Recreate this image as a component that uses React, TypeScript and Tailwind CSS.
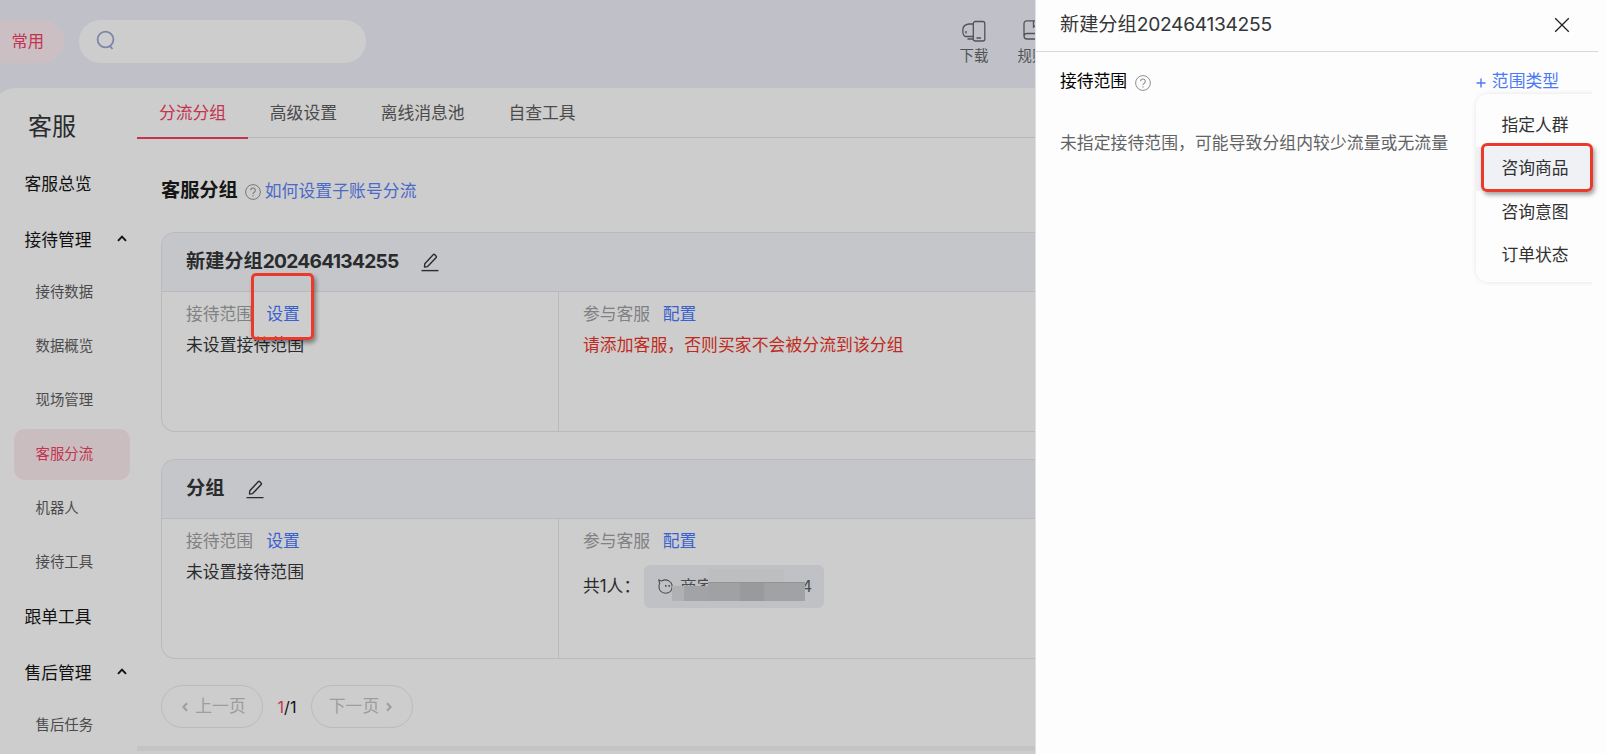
import { ReactNode } from 'react';

const sideItems = [
    { label: '客服总览', type: 'group' },
    { label: '接待管理', type: 'open' },
    { label: '接待数据', type: 'sub' },
    { label: '数据概览', type: 'sub' },
    { label: '现场管理', type: 'sub' },
    { label: '客服分流', type: 'active' },
    { label: '机器人', type: 'sub' },
    { label: '接待工具', type: 'sub' },
    { label: '跟单工具', type: 'group' },
    { label: '售后管理', type: 'open' },
    { label: '售后任务', type: 'sub' },
];

const tabs = ['分流分组', '高级设置', '离线消息池', '自查工具'];
const scopeTypes = ['指定人群', '咨询商品', '咨询意图', '订单状态'];

function HelpIcon({ className }: { className?: string }) {
    return (
        <svg viewBox="0 0 16 16" className={`size-4 shrink-0 ${className}`} fill="none" stroke="currentColor">
            <circle cx="8" cy="8" r="7.4" strokeWidth="1" />
            <path d="M5.7 6.3a2.3 2.3 0 1 1 3.6 1.9c-.8.6-1.3.9-1.3 1.9" strokeWidth="1.1" />
            <path d="M8 11.2v1.3" strokeWidth="1.2" />
        </svg>
    );
}

function EditIcon() {
    return (
        <svg viewBox="0 0 18 19" className="w-[18px] h-[19px]" fill="none" stroke="#2b2c2e" strokeWidth="1.4">
            <path d="M3.8 10.7 12.4 1.6Q13 1 13.6 1.6L15.2 3.2Q15.7 3.8 15.2 4.4L6.6 13.6 3.5 14z" strokeLinejoin="round" />
            <path d="M.5 17.6h17" />
        </svg>
    );
}

function SideItem({ label, type }: { label: string; type: string }) {
    if (type === 'sub' || type === 'active') {
        return (
            <div className="h-[54px] flex items-center pl-[14px]">
                <div
                    className={`w-[116px] h-[51px] rounded-[11px] pl-[21.5px] flex items-center text-[14.4px] ${
                        type === 'active' ? 'bg-[#cabdc0] text-[#c2344f]' : 'text-[#4b4b4c]'
                    }`}
                >
                    {label}
                </div>
            </div>
        );
    }
    return (
        <div className={`h-14 flex items-center pl-[24.5px] text-[#111] ${type === 'open' ? '-mb-[3px]' : ''}`}>
            <span className="w-[92.5px] pt-[2px]">{label}</span>
            {type === 'open' && (
                <svg viewBox="0 0 10 7" className="w-[10px] h-[7px] -mt-1" fill="none" stroke="#111" strokeWidth="1.9">
                    <path d="M1 5.8 5 1.7 9 5.8" />
                </svg>
            )}
        </div>
    );
}

function GroupCard({ name, digits, children }: { name: string; digits?: string; children: ReactNode }) {
    return (
        <div className="h-[200px] border border-[#b9babc] rounded-tl-[14px] rounded-bl-[14px] border-r-0 overflow-hidden flex flex-col">
            <div className="h-[59px] shrink-0 bg-[#c4c6c9] border-b border-[#b9babc] flex items-center pl-[24px] text-[19.2px] font-bold text-[#2a2b2d]">
                <span className="mr-[22px] -mt-[2px]">
                    {name}
                    <span className="tracking-[-0.75px]">{digits}</span>
                </span>
                <EditIcon />
            </div>
            <div className="flex-1 flex">
                <div className="w-[397px] pl-[24px] pt-[8.5px] border-r border-[#b9babc]">
                    <div className="h-[27px] leading-[27px] flex gap-[13px]">
                        <span className="text-[#808183]">接待范围</span>
                        <span className="text-[#3a61cd]">设置</span>
                    </div>
                    <div className="mt-1 h-[27px] leading-[27px] tracking-[0.09px]">未设置接待范围</div>
                </div>
                <div className="pl-[24px] pt-[8.5px]">
                    <div className="h-[27px] leading-[27px] flex gap-[12.5px]">
                        <span className="text-[#808183]">参与客服</span>
                        <span className="text-[#3a61cd]">配置</span>
                    </div>
                    {children}
                </div>
            </div>
        </div>
    );
}

function StaffChip() {
    return (
        <div className="relative ml-[11px] w-[180px] h-[43px] rounded-md bg-[#bfc1c4] flex items-center pl-[14px] pr-[12px] text-[#4b4c4e]">
            <svg viewBox="0 0 15 15" className="size-[15px] mr-[7px]" fill="none" stroke="currentColor" strokeWidth="1.1">
                <path d="M.8 1 3.6 1.9C8.5-.8 14.3 2.6 14.2 7.8 14 12 11 14.3 7.5 14.3 3 14.3.8 10.5 1 7.5 1 5.5 1.7 4.5 1.7 4.5z" />
                <path d="M7.8 6v1.8M11.2 6v1.8" strokeWidth="1.5" />
            </svg>
            <span className="pt-[3px]">商家</span>
            <span className="ml-auto text-[16px]">4</span>
            <div className="absolute left-[64px] top-[4px] w-[76px] h-[13px] bg-[#bcbec0]" />
            <div className="absolute left-[28px] top-[21px] w-[12px] h-[15px] bg-[#b0b1b3]" />
            <div className="absolute left-[40px] top-[21px] w-[24px] h-[15px] bg-[#a2a3a5]" />
            <div className="absolute left-[64px] top-[17px] w-[97px] h-[19px] flex border-t border-[#939496]">
                <div className="w-[32px] bg-[#a0a1a3]" />
                <div className="w-[24px] bg-[#999a9c]" />
                <div className="flex-1 bg-[#a1a2a4]" />
            </div>
        </div>
    );
}

function TopBar() {
    return (
        <div className="h-[88px] bg-[#c0c1c8] flex items-start text-[14.4px] text-[#515255]">
            <div className="mt-5 w-16 h-[43px] shrink-0 rounded-r-full bg-[#cbbfc3] text-[#c2344f] text-[16.3px] flex items-center pl-[11.5px]">
                常用
            </div>
            <div className="mt-5 ml-[15px] w-[287px] h-[43px] shrink-0 rounded-full bg-[#cdcdcd] flex items-center pl-[17px]">
                <svg viewBox="0 0 20 20" className="size-5 -mt-[3px]" fill="none" stroke="#7d86a8" strokeWidth="1.8">
                    <circle cx="9.5" cy="9.5" r="7.9" />
                    <path d="M13.5 15.5 16.5 19" />
                </svg>
            </div>
            <div className="ml-[593.5px] mt-[20px] w-[29px] shrink-0 flex flex-col items-center">
                <svg viewBox="0 0 24 22" className="w-6 h-[22px]" fill="none" stroke="currentColor" strokeWidth="1.3">
                    <rect x="11.3" y="1.5" width="11.5" height="19.5" rx="2" />
                    <path d="M11.3 4H7C3 4.500.8 7 .8 10s.2 6.500 3 6.500h7.500M5.500 19h5.500M14.500 18h4.500M4 11v2.500" />
                </svg>
                <span className="mt-[3px] leading-[22px]">下载</span>
            </div>
            <div className="ml-[29px] mt-[19px] w-[29px] shrink-0 flex flex-col items-center">
                <svg viewBox="0 0 18 22" className="w-[18px] h-[22px]" fill="none" stroke="currentColor" strokeWidth="1.3">
                    <path d="M17 1.800H4C2 1.800 1 3 1 5v12c0 2 1 3 3 3h13M1 17.500c0-2 1-3 3-3h13V1.800M10.500 2v6l3-2" />
                </svg>
                <span className="mt-[4px] leading-[22px]">规则</span>
            </div>
        </div>
    );
}

function ScopePanel() {
    return (
        <div className="w-[571px] shrink-0 bg-[#fdfdfd] border-l border-[#dfe0e7] relative whitespace-nowrap">
            <div className="h-[52px] mr-2 border-b border-[#d6d7da] flex items-center justify-between pl-6 pr-[28px] text-[19.2px] text-[#353638]">
                <span className="-mt-[2px]">
                    新建分组<span className="tracking-[-0.3px]">202464134255</span>
                </span>
                <svg viewBox="0 0 16 16" className="size-4 -mt-px" stroke="#222" strokeWidth="1.3">
                    <path d="M1.2 1.2 14.8 14.8M14.8 1.2 1.2 14.8" />
                </svg>
            </div>
            <div className="flex items-center h-[60px] pl-6 pr-[47px]">
                <span className="text-black">接待范围</span>
                <HelpIcon className="ml-[7.5px] mt-[2px] text-[#8e8f91]" />
                <span className="ml-auto flex items-center gap-[6px] text-[#4b78f5]">
                    <svg viewBox="0 0 10 10" className="size-[10px] mt-px" stroke="currentColor" strokeWidth="1.4">
                        <path d="M5 .5v9M.5 5h9" />
                    </svg>
                    范围类型
                </span>
            </div>
            <div className="pl-6 mt-[17px] leading-[28px] tracking-[0.09px] text-[#626365]">
                未指定接待范围，可能导致分组内较少流量或无流量
            </div>
            <div className="absolute left-[432px] top-[86px] w-[124px] h-[204px] pl-2 pt-2 overflow-hidden">
                <div className="w-[130px] h-[188px] rounded-[12px] bg-[#fdfdfd] shadow-[0_0_5px_rgba(0,0,0,0.1)] pt-[9.5px] text-[#303133]">
                    {scopeTypes.map((t) => (
                        <div
                            key={t}
                            className={`h-[43.5px] flex items-center pl-[25.5px] ${t === '咨询商品' ? 'bg-[#eff1f5]' : ''}`}
                        >
                            {t}
                        </div>
                    ))}
                </div>
            </div>
            <div className="absolute left-[445px] top-[142.5px] w-[112px] h-[49px] rounded-[6px] border-[3px] border-[#e93a2c] shadow-[2px_3px_4px_rgba(0,0,0,0.35)]" />
        </div>
    );
}

export default function App() {
    return (
        <div className="w-[1606px] h-[754px] overflow-hidden flex text-[16.8px] text-[#2a2b2d] font-[Inter,'Noto_Sans_CJK_SC',sans-serif]">
            <div className="relative w-[1035px] shrink-0 h-[754px] overflow-hidden bg-[#c0c1c8] whitespace-nowrap">
                <TopBar />
                <div className="-ml-2 pl-2 h-[666px] rounded-tl-[24px] bg-[#cdcdcd] flex">
                    <div className="w-[137px] shrink-0">
                        <div className="h-[68px] pl-[28px] pt-[3px] leading-[72px] text-[24px] text-[#2a2b2d]">客服</div>
                        {sideItems.map((item) => (
                            <SideItem key={item.label} {...item} />
                        ))}
                    </div>
                    <div className="flex-1 min-w-0 flex flex-col">
                        <div className="h-[50px] shrink-0 border-b border-[#b6b7ba] flex">
                            {tabs.map((tab, i) => (
                                <div
                                    key={tab}
                                    className={`h-[51px] px-[21.9px] leading-[51px] ${
                                        i === 0 ? 'text-[#c2344f] border-b-2 border-[#c2344f]' : 'text-[#4b4b4c]'
                                    }`}
                                >
                                    {tab}
                                </div>
                            ))}
                        </div>
                        <div className="pl-6 flex-1 flex flex-col">
                            <div className="h-[94px] pt-[13px] flex items-center">
                                <span className="text-[19.2px] font-bold text-[#151515] mr-[7px] -mt-[2px]">客服分组</span>
                                <HelpIcon className="text-[#77787a] mr-[4px] mt-px" />
                                <span className="pt-px text-[#4a69c8] tracking-[0.09px]">如何设置子账号分流</span>
                            </div>
                            <GroupCard name="新建分组" digits="202464134255">
                                <div className="mt-1 h-[27px] leading-[27px] tracking-[0.09px] text-[#bf2a20]">
                                    请添加客服，否则买家不会被分流到该分组
                                </div>
                            </GroupCard>
                            <div className="h-[27px]" />
                            <GroupCard name="分组">
                                <div className="mt-[10px] flex items-center">
                                    <span className="w-[50px] pt-px">共1人：</span>
                                    <StaffChip />
                                </div>
                            </GroupCard>
                            <div className="mt-[26px] flex items-center text-[#9c9d9f]">
                                <div className="w-[102px] h-[43px] rounded-full border border-[#babbbd] flex items-center justify-center gap-[7px] pl-[4px]">
                                    <svg viewBox="0 0 6 10" className="w-[6px] h-[10px]" fill="none" stroke="currentColor" strokeWidth="2">
                                        <path d="M5 1.2 1.3 5 5 8.8" />
                                    </svg>
                                    上一页
                                </div>
                                <div className="w-[48px] text-center text-[16px] text-[#111]">
                                    <span className="text-[#c2344f]">1</span>/1
                                </div>
                                <div className="w-[102px] h-[43px] rounded-full border border-[#babbbd] flex items-center justify-center gap-[7px] pr-[3px]">
                                    下一页
                                    <svg viewBox="0 0 6 10" className="w-[6px] h-[10px]" fill="none" stroke="currentColor" strokeWidth="2">
                                        <path d="M1 1.2 4.7 5 1 8.8" />
                                    </svg>
                                </div>
                            </div>
                        </div>
                        <div className="h-[5px] mb-[3px] bg-[#c4c4c4]" />
                    </div>
                </div>
                <div className="absolute left-[251px] top-[273px] w-[63px] h-[67px] rounded-[5px] border-[3px] border-[#e93a2c] shadow-[2px_3px_4px_rgba(0,0,0,0.4)]" />
            </div>
            <ScopePanel />
        </div>
    );
}
